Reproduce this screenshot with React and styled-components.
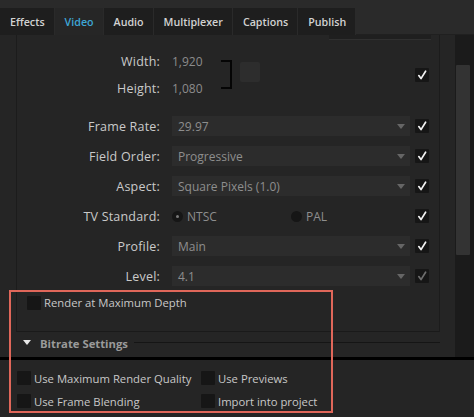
import React from 'react';
import styled, { createGlobalStyle } from 'styled-components';

const GlobalStyle = createGlobalStyle`
  html, body { margin: 0; padding: 0; background: #252525; }
  body { font-family: "Open Sans", "DejaVu Sans", sans-serif; }
`;

const tabs = ['Effects', 'Video', 'Audio', 'Multiplexer', 'Captions', 'Publish'];

const rows = [
  { label: 'Frame Rate:', value: '29.97' },
  { label: 'Field Order:', value: 'Progressive' },
  { label: 'Aspect:', value: 'Square Pixels (1.0)' },
  { label: 'TV Standard:', radio: true },
  { label: 'Profile:', value: 'Main' },
  { label: 'Level:', value: '4.1', dim: true },
];

const Check = ({ checked, dim }) => (
  <Box>
    {checked && (
      <svg width='14' height='14' viewBox='0 0 14 14'>
        <path
          d='M3.8 7.6 L6 10.6 L10.6 3.2'
          fill='none'
          stroke={dim ? '#6e6e6e' : '#f2f2f2'}
          strokeWidth='1.7'
          strokeLinecap='round'
          strokeLinejoin='round'
        />
      </svg>
    )}
  </Box>
);

const App = () => {
  return (
    <Page>
      <GlobalStyle />
      <TopStrip />
      <TabBar>
        {tabs.map((t) => (
          <Tab key={t} active={t === 'Video'}>
            {t}
          </Tab>
        ))}
        <TabFill />
      </TabBar>

      <Main>
        <Content>
          <Section>
            <TopStub />
            <SizeGroup>
              <SizeFields>
                <SizeRow>
                  <Label>Width:</Label>
                  <Value>1,920</Value>
                </SizeRow>
                <SizeRow>
                  <Label>Height:</Label>
                  <Value>1,080</Value>
                </SizeRow>
              </SizeFields>
              <Bracket />
              <LinkSquare />
              <Spacer />
              <Check checked />
            </SizeGroup>

            {rows.map((r) => (
              <Row key={r.label}>
                <Label>{r.label}</Label>
                {r.radio ? (
                  <RadioGroup>
                    <RadioItem>
                      <Radio on />
                      NTSC
                    </RadioItem>
                    <RadioItem>
                      <Radio />
                      PAL
                    </RadioItem>
                  </RadioGroup>
                ) : (
                  <Select>
                    {r.value}
                    <Arrow />
                  </Select>
                )}
                <Check checked dim={r.dim} />
              </Row>
            ))}

            <DepthRow>
              <Check />
              <OptionText>Render at Maximum Depth</OptionText>
            </DepthRow>
          </Section>

          <GroupHeader>
            <Triangle />
            <GroupTitle>Bitrate Settings</GroupTitle>
            <Rule />
          </GroupHeader>
        </Content>
        <Scrollbar>
          <Thumb />
        </Scrollbar>
      </Main>

      <Divider />

      <Footer>
        <Option>
          <Check />
          <OptionText>Use Maximum Render Quality</OptionText>
        </Option>
        <Option>
          <Check />
          <OptionText>Use Previews</OptionText>
        </Option>
        <Option>
          <Check />
          <OptionText>Use Frame Blending</OptionText>
        </Option>
        <Option>
          <Check />
          <OptionText>Import into project</OptionText>
        </Option>
      </Footer>

      <Highlight />
    </Page>
  );
};

const Page = styled.div`
  position: relative;
  width: 474px;
  height: 417px;
  overflow: hidden;
  background: #252525;
  color: #c8c8c8;
  font-size: 12px;
`;

const TopStrip = styled.div`
  height: 8px;
  background: #2a2a2a;
`;

const TabBar = styled.div`
  display: flex;
  height: 27px;
  background: #2a2a2a;
`;

const Tab = styled.div`
  display: flex;
  align-items: center;
  padding: 0 9px 0 10px;
  margin-right: 1px;
  font-weight: 600;
  font-size: 10.7px;
  white-space: nowrap;
  color: ${(p) => (p.active ? '#3ea6d6' : '#d2d2d2')};
  background: ${(p) => (p.active ? '#262626' : '#1e1e1e')};
`;

const TabFill = styled.div`
  flex: 1;
  border-bottom: 1px solid #202020;
`;

const Main = styled.div`
  display: flex;
  height: 322px;
`;

const Content = styled.div`
  width: 455px;
  padding-left: 16px;
  box-sizing: border-box;
  display: flex;
  flex-direction: column;
`;

const Section = styled.div`
  position: relative;
  width: 424px;
  height: 297px;
  box-sizing: border-box;
  border-left: 1px solid #1c1c1c;
  border-right: 1px solid #1c1c1c;
  border-bottom: 1px solid #1a1a1a;
  padding: 16px 10px 0 0;
  display: flex;
  flex-direction: column;
`;

const TopStub = styled.div`
  position: absolute;
  top: 0;
  left: 312px;
  width: 102px;
  height: 4px;
  background: #1f1f1f;
  border-bottom: 1px solid #303030;
`;

const SizeGroup = styled.div`
  display: flex;
  align-items: center;
  height: 47px;
  margin-bottom: 18px;
`;

const SizeFields = styled.div`
  display: flex;
  flex-direction: column;
  gap: 7px;
`;

const SizeRow = styled.div`
  display: flex;
  align-items: center;
  height: 20px;
`;

const Label = styled.div`
  width: 143px;
  flex-shrink: 0;
  text-align: right;
  margin-right: 12px;
  font-size: 12.5px;
  letter-spacing: 0.2px;
  white-space: nowrap;
  color: #cacaca;
`;

const Value = styled.div`
  width: 49px;
  color: #8c8c8c;
`;

const Bracket = styled.div`
  width: 9px;
  height: 25px;
  border: 2px solid #050505;
  border-left: none;
  margin-right: 8px;
`;

const LinkSquare = styled.div`
  width: 20px;
  height: 20px;
  background: #2d2d2d;
  border-radius: 2px;
  margin-top: -6px;
`;

const Spacer = styled.div`
  flex: 1;
`;

const Row = styled.div`
  display: flex;
  align-items: center;
  height: 20px;
  margin-bottom: 10px;
`;

const Select = styled.div`
  position: relative;
  display: flex;
  align-items: center;
  width: 239px;
  height: 20px;
  padding-left: 6px;
  box-sizing: border-box;
  margin-right: 5px;
  background: #2c2c2c;
  color: #8e8e8e;
`;

const Arrow = styled.div`
  position: absolute;
  right: 5px;
  top: 8px;
  width: 0;
  height: 0;
  border-left: 4px solid transparent;
  border-right: 4px solid transparent;
  border-top: 5px solid #666;
`;

const RadioGroup = styled.div`
  display: flex;
  width: 239px;
  margin-right: 5px;
`;

const RadioItem = styled.div`
  display: flex;
  align-items: center;
  width: 119px;
  gap: 4px;
  color: #8e8e8e;
`;

const Radio = styled.div`
  width: 11px;
  height: 11px;
  border-radius: 50%;
  background: #161616;
  display: flex;
  align-items: center;
  justify-content: center;
  &::after {
    content: '';
    width: 3px;
    height: 3px;
    border-radius: 50%;
    background: ${(p) => (p.on ? '#7a7a7a' : 'transparent')};
  }
`;

const Box = styled.div`
  width: 14px;
  height: 14px;
  flex-shrink: 0;
  background: #161616;
  border-radius: 1px;
  display: flex;
`;

const DepthRow = styled.div`
  display: flex;
  align-items: center;
  gap: 3px;
  padding-left: 10px;
  margin-top: -1px;
`;

const OptionText = styled.span`
  font-size: 11.3px;
  white-space: nowrap;
  color: #c8c8c8;
`;

const GroupHeader = styled.div`
  display: flex;
  align-items: center;
  width: 424px;
  height: 25px;
  padding: 0 0 3px 7px;
  box-sizing: border-box;
`;

const Triangle = styled.div`
  width: 0;
  height: 0;
  border-left: 4px solid transparent;
  border-right: 4px solid transparent;
  border-top: 5px solid #e8e8e8;
  margin-right: 9px;
  margin-top: -2px;
`;

const GroupTitle = styled.div`
  font-weight: 700;
  font-size: 11.3px;
  color: #9a9a9a;
  margin-right: 6px;
`;

const Rule = styled.div`
  flex: 1;
  height: 1px;
  background: #151515;
  margin-top: -1px;
`;

const Scrollbar = styled.div`
  width: 19px;
  background: #1b1b1b;
  padding-top: 30px;
  box-sizing: border-box;
`;

const Thumb = styled.div`
  width: 14px;
  height: 190px;
  margin-left: 1px;
  background: #333;
  border-radius: 1px;
`;

const Divider = styled.div`
  height: 3px;
  background: #000;
`;

const Footer = styled.div`
  display: grid;
  grid-template-columns: 184px 1fr;
  row-gap: 9px;
  padding: 11px 0 0 17px;
`;

const Option = styled.div`
  display: flex;
  align-items: center;
  gap: 3px;
  height: 14px;
`;

const Highlight = styled.div`
  position: absolute;
  left: 9px;
  top: 290px;
  width: 324px;
  height: 123px;
  box-sizing: border-box;
  border: 2px solid #e0675a;
  pointer-events: none;
`;

export default App;
